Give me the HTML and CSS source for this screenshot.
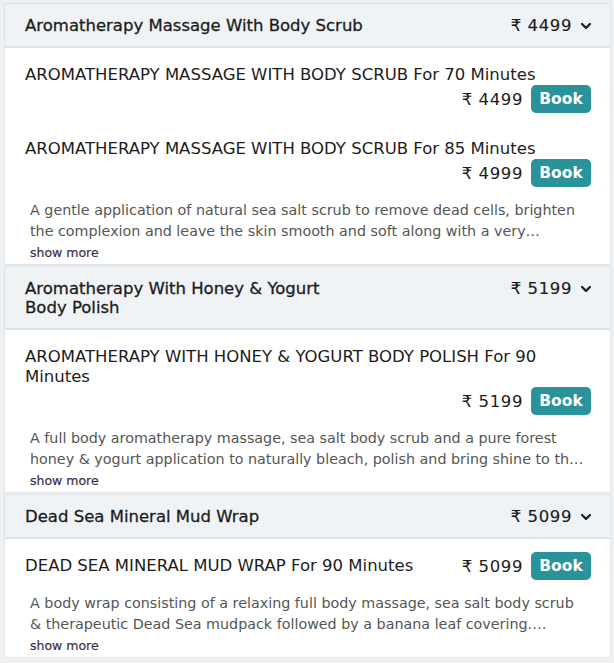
FILE: index.html
```html
<!DOCTYPE html>
<html lang="en">
<head>
<meta charset="utf-8">
<title>Spa Menu</title>
<link rel="stylesheet" href="styles.css">
</head>
<body>
<div class="list">
  <section class="card">
    <header class="card-head">
      <h3 class="head-title">Aromatherapy Massage With Body Scrub</h3>
      <div class="head-price"><span class="price">₹ 4499</span>
        <svg class="chev" viewBox="0 0 10 6" width="10" height="6"><polyline points="1,1 5,4.8 9,1" /></svg>
      </div>
    </header>
    <div class="card-body">
      <div class="item">
        <div class="item-title">AROMATHERAPY MASSAGE WITH BODY SCRUB For 70 Minutes</div>
        <div class="buy"><span class="price">₹ 4499</span><button class="book">Book</button></div>
      </div>
      <div class="item">
        <div class="item-title">AROMATHERAPY MASSAGE WITH BODY SCRUB For 85 Minutes</div>
        <div class="buy"><span class="price">₹ 4999</span><button class="book">Book</button></div>
      </div>
      <p class="desc">A gentle application of natural sea salt scrub to remove dead cells, brighten the complexion and leave the skin smooth and soft along with a very relaxing full body aromatherapy massage.</p>
      <a class="more" href="#">show more</a>
    </div>
  </section>

  <section class="card">
    <header class="card-head">
      <h3 class="head-title">Aromatherapy With Honey &amp; Yogurt Body Polish</h3>
      <div class="head-price"><span class="price">₹ 5199</span>
        <svg class="chev" viewBox="0 0 10 6" width="10" height="6"><polyline points="1,1 5,4.8 9,1" /></svg>
      </div>
    </header>
    <div class="card-body">
      <div class="item">
        <div class="item-title">AROMATHERAPY WITH HONEY &amp; YOGURT BODY POLISH For 90 Minutes</div>
        <div class="buy"><span class="price">₹ 5199</span><button class="book">Book</button></div>
      </div>
      <p class="desc">A full body aromatherapy massage, sea salt body scrub and a pure forest honey &amp; yogurt application to naturally bleach, polish and bring shine to the skin, leaving it soft and glowing.</p>
      <a class="more" href="#">show more</a>
    </div>
  </section>

  <section class="card">
    <header class="card-head">
      <h3 class="head-title">Dead Sea Mineral Mud Wrap</h3>
      <div class="head-price"><span class="price">₹ 5099</span>
        <svg class="chev" viewBox="0 0 10 6" width="10" height="6"><polyline points="1,1 5,4.8 9,1" /></svg>
      </div>
    </header>
    <div class="card-body">
      <div class="item">
        <div class="item-title">DEAD SEA MINERAL MUD WRAP For 90 Minutes</div>
        <div class="buy"><span class="price">₹ 5099</span><button class="book">Book</button></div>
      </div>
      <p class="desc">A body wrap consisting of a relaxing full body massage, sea salt body scrub &amp; therapeutic Dead Sea mudpack followed by a banana leaf covering. Detoxifying and rejuvenating the whole body.</p>
      <a class="more" href="#">show more</a>
    </div>
  </section>
</div>
</body>
</html>
```

FILE: styles.css
```css
* { box-sizing: border-box; }

html, body {
  margin: 0;
  padding: 0;
  background: #eef0f2;
}

body {
  font-family: "DejaVu Sans", "Noto Sans", sans-serif;
  color: #1c1c1c;
}

.list {
  padding: 3px 3px 0 4px;
  display: flex;
  flex-direction: column;
  gap: 1px;
}

.card {
  background: #fff;
  border: 1px solid #e2e5e8;
}

.card-head {
  display: flex;
  justify-content: space-between;
  align-items: flex-start;
  padding: 12px 19px 11px 20px;
  background: #eff3f6;
  border-bottom: 2px solid #dfe3e6;
}

.head-title {
  margin: 0;
  max-width: 341px;
  font-size: 16.5px;
  line-height: 19px;
  font-weight: 400;
  -webkit-text-stroke: 0.3px #1c1c1c;
  color: #1c1c1c;
}

.head-price {
  display: flex;
  align-items: center;
  gap: 9px;
  line-height: 19px;
  -webkit-text-stroke: 0.15px #1c1c1c;
}

.chev {
  fill: none;
  stroke: #222;
  stroke-width: 2.3;
  stroke-linecap: round;
  stroke-linejoin: round;
}

.card-body {
  padding: 4px 19px 1px 20px;
}

.item {
  display: flex;
  flex-wrap: wrap;
  align-items: flex-start;
  justify-content: space-between;
  padding: 13px 0;
}

.item-title {
  font-size: 16.5px;
  line-height: 20px;
  padding-bottom: 4px;
  color: #1c1c1c;
}

.buy {
  margin-left: auto;
  margin-top: -4px;
  display: flex;
  align-items: center;
  gap: 8px;
}

.price {
  font-size: 16.5px;
  letter-spacing: 0.6px;
  color: #1c1c1c;
}

.book {
  width: 60px;
  height: 28px;
  border: 0;
  border-radius: 5px;
  background: #2a929a;
  color: #fff;
  font-family: inherit;
  font-size: 15.5px;
  font-weight: 700;
  padding: 0;
}

.desc {
  margin: 0;
  padding: 0 5px;
  font-size: 14.3px;
  line-height: 21px;
  color: #555;
  display: -webkit-box;
  -webkit-box-orient: vertical;
  -webkit-line-clamp: 2;
  overflow: hidden;
}

.more {
  display: block;
  margin-top: 1px;
  padding: 0 5px;
  font-size: 12.5px;
  line-height: 20px;
  color: #3b3049;
  -webkit-text-stroke: 0.2px #3b3049;
  text-decoration: none;
}
```
